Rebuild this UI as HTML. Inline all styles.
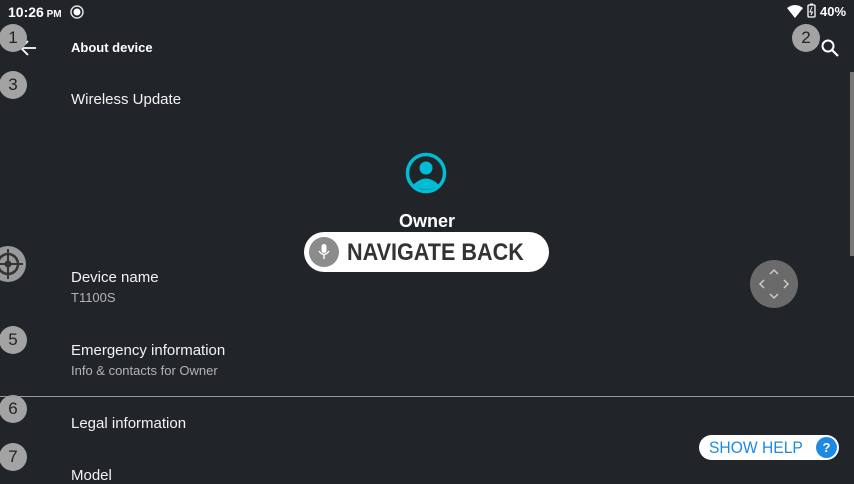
<!DOCTYPE html>
<html><head><meta charset="utf-8"><style>
*{margin:0;padding:0;box-sizing:border-box}
body{width:854px;height:480px;background:#212529;overflow:hidden;position:relative;font-family:"Liberation Sans",sans-serif;color:#fff}
.a{position:absolute}
.badge{position:absolute;width:28px;height:28px;border-radius:50%;background:#a3a3a3;color:#222;font-size:17px;text-align:center;line-height:27px}
.t{position:absolute;left:71px;font-size:15px;color:#f2f2f2}
.s{position:absolute;left:71px;font-size:13px;color:#b3b3b3}
</style></head><body>
<div class="a" style="left:8px;top:4px;font-size:14px;font-weight:bold">10:26<span style="font-size:10px"> PM</span></div>
<svg class="a" style="left:70px;top:5px" width="14" height="14"><circle cx="7" cy="7" r="6" fill="none" stroke="#ddd" stroke-width="1.5"/><circle cx="7" cy="7" r="3.5" fill="#fff"/></svg>
<svg class="a" style="left:787px;top:5px" width="16" height="13"><path d="M0 3 Q8 -3 16 3 L8 13Z" fill="#fff"/></svg>
<svg class="a" style="left:807px;top:3px" width="10" height="15"><rect x="1" y="2" width="7" height="12" rx="1" fill="none" stroke="#fff" stroke-width="1.3"/><rect x="3" y="0.5" width="3" height="2" fill="#fff"/><path d="M5 4 L3 9 H5.5 L4 12" stroke="#fff" fill="none" stroke-width="1"/></svg>
<div class="a" style="left:820px;top:4px;font-size:13px;font-weight:bold">40%</div>
<svg class="a" style="left:19px;top:40px" width="18" height="16"><path d="M17 8H2M9 1L2 8L9 15" stroke="#fff" stroke-width="1.8" fill="none"/></svg>
<div class="a" style="left:71px;top:40px;font-size:13px;font-weight:bold">About device</div>
<svg class="a" style="left:820px;top:38px" width="20" height="20"><circle cx="8" cy="8" r="5.5" stroke="#fff" stroke-width="2" fill="none"/><path d="M12 12L18 18" stroke="#fff" stroke-width="2.2"/></svg>
<div class="badge" style="left:-1px;top:24px">1</div>
<div class="badge" style="left:792px;top:24px">2</div>
<div class="badge" style="left:-1px;top:71px">3</div>
<div class="badge" style="left:-1px;top:326px">5</div>
<div class="badge" style="left:-1px;top:395px">6</div>
<div class="badge" style="left:-1px;top:443px">7</div>
<div class="t" style="top:91px">Wireless Update</div>
<svg class="a" style="left:405px;top:152px" width="42" height="42"><circle cx="21" cy="21" r="18.5" fill="none" stroke="#00bcd4" stroke-width="3.5"/><circle cx="21" cy="16" r="6.5" fill="#00bcd4"/><path d="M8 33 Q21 20 34 33 Q21 42 8 33Z" fill="#00bcd4"/></svg>
<div class="a" style="left:0;width:854px;text-align:center;top:211px;font-size:18px;font-weight:bold">Owner</div>
<div class="a" style="left:304px;top:232px;width:245px;height:40px;border-radius:20px;background:#fff"></div>
<div class="a" style="left:309px;top:237px;width:30px;height:30px;border-radius:50%;background:#8c8c8c"></div>
<svg class="a" style="left:316px;top:243px" width="16" height="18"><rect x="5.5" y="1" width="5" height="9" rx="2.5" fill="#fff"/><path d="M3 8 Q8 15 13 8M8 12V16" stroke="#fff" stroke-width="1.4" fill="none"/></svg>
<div class="a" style="left:347px;top:239px;font-size:24px;font-weight:bold;color:#333;transform:scaleX(0.9);transform-origin:0 0;white-space:nowrap">NAVIGATE BACK</div>
<svg class="a" style="left:-8px;top:238px" width="50" height="52"><circle cx="16" cy="26" r="18" fill="#9a9a9a"/><circle cx="16" cy="26" r="10" fill="none" stroke="#333" stroke-width="2.5"/><circle cx="16" cy="26" r="3.5" fill="#333"/><path d="M16 11V41M1 26H31" stroke="#333" stroke-width="2"/></svg>
<div class="t" style="top:269px">Device name</div>
<div class="s" style="top:290px">T1100S</div>
<div class="a" style="left:750px;top:260px;width:48px;height:48px;border-radius:50%;background:#6a6a6a"></div>
<svg class="a" style="left:750px;top:260px" width="48" height="48" fill="none" stroke="#ccc" stroke-width="1.5"><path d="M20 14L24 10L28 14M20 34L24 38L28 34M14 20L10 24L14 28M34 20L38 24L34 28"/></svg>
<div class="t" style="top:342px">Emergency information</div>
<div class="s" style="top:363px">Info &amp; contacts for Owner</div>
<div class="a" style="left:0;top:396px;width:854px;height:1px;background:#9a9a9a"></div>
<div class="t" style="top:415px">Legal information</div>
<div class="t" style="top:467px">Model</div>
<div class="a" style="left:699px;top:435px;width:140px;height:25px;border-radius:13px;background:#fff"></div>
<div class="a" style="left:709px;top:438px;font-size:17px;color:#1e88e5;transform:scaleX(0.92);transform-origin:0 0;white-space:nowrap">SHOW HELP</div>
<div class="a" style="left:816px;top:437px;width:21px;height:21px;border-radius:50%;background:#1e88e5;color:#fff;font-size:13px;font-weight:bold;text-align:center;line-height:21px">?</div>
<div class="a" style="left:850px;top:72px;width:4px;height:184px;background:#777"></div>
</body></html>
